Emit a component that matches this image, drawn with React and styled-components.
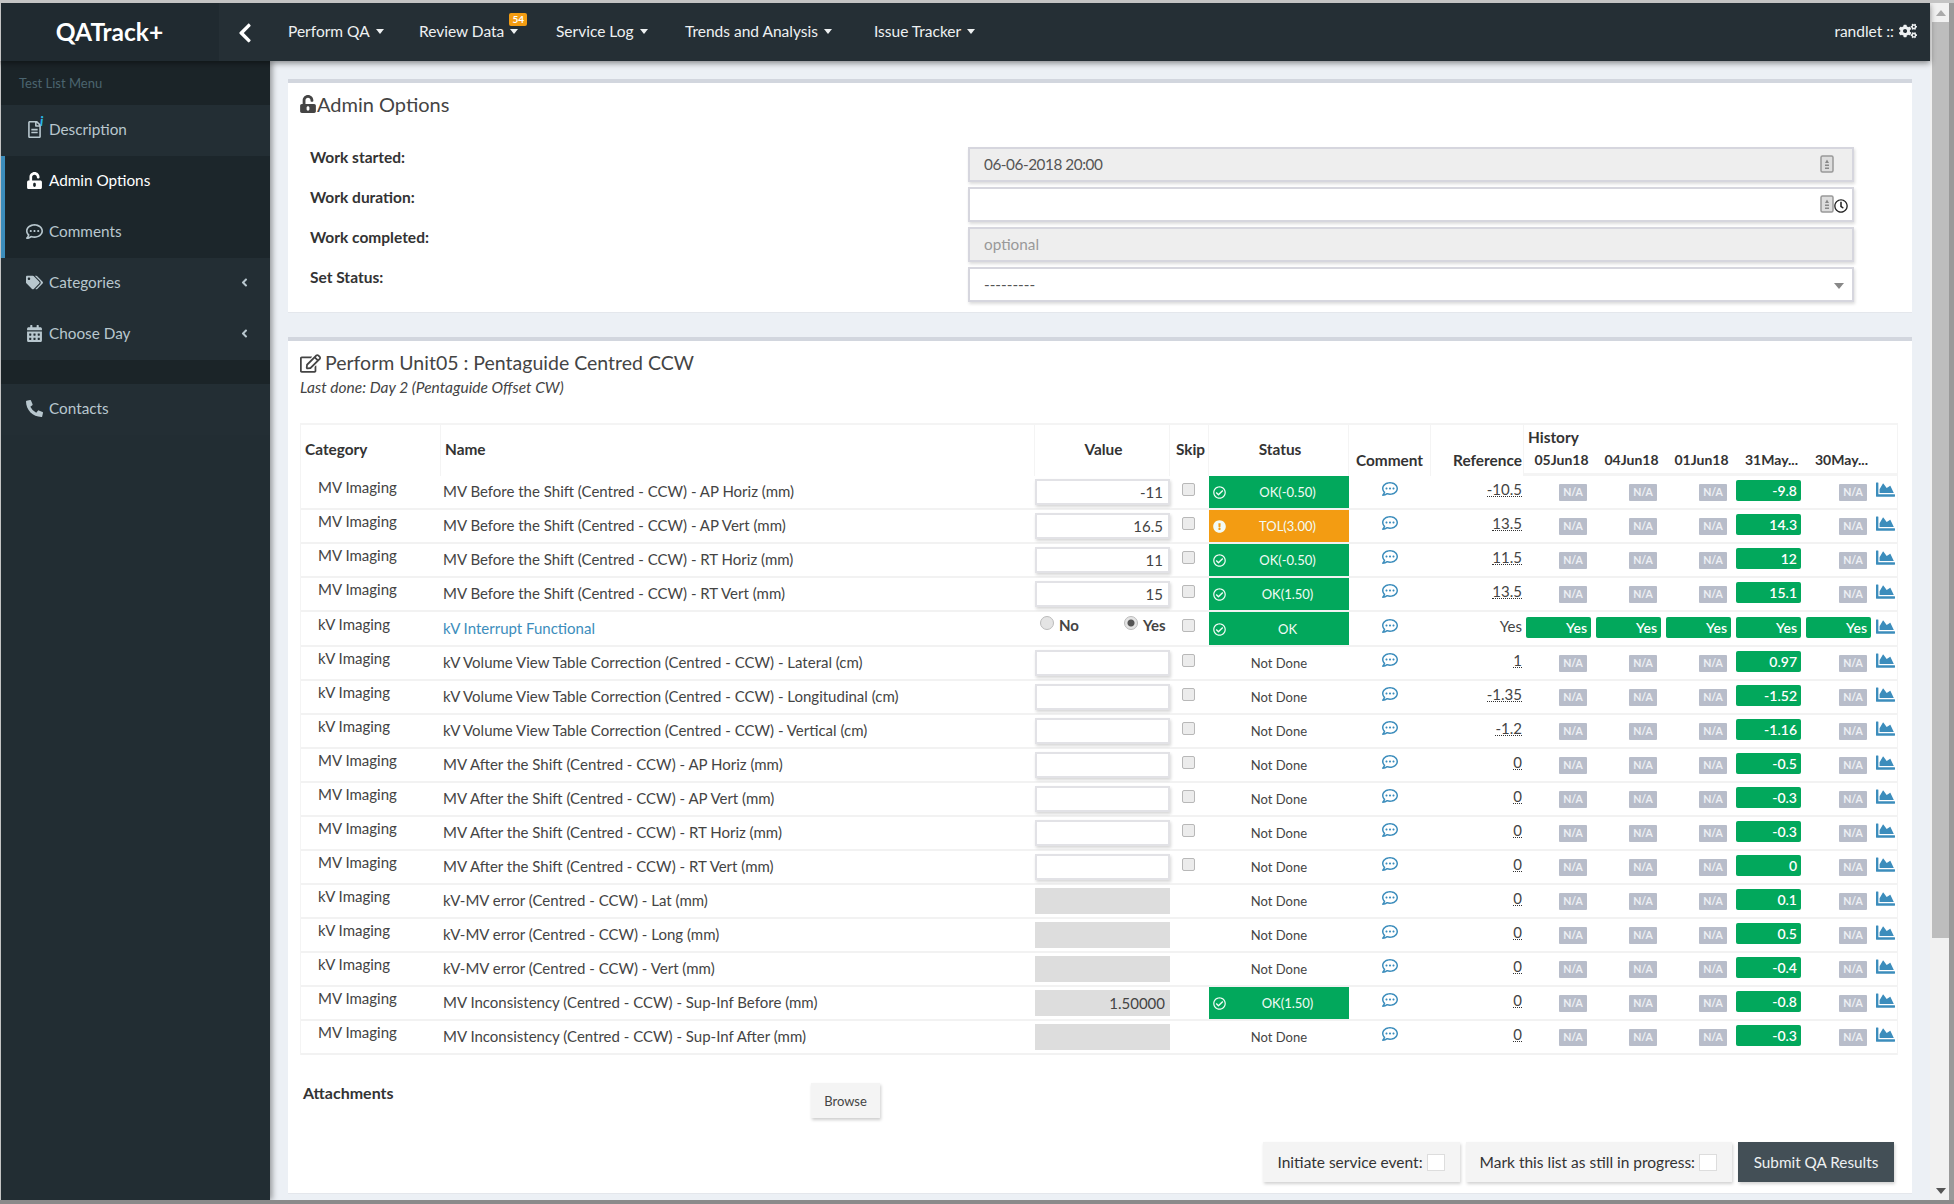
import React from "react";
import styled, { createGlobalStyle } from "styled-components";
import {
  FaAngleLeft,
  FaCalendarAlt,
  FaChartArea,
  FaChevronLeft,
  FaCogs,
  FaExclamationCircle,
  FaPhoneAlt,
  FaRegCheckCircle,
  FaRegClock,
  FaRegCommentDots,
  FaRegEdit,
  FaRegFileAlt,
  FaTags,
  FaUnlockAlt,
} from "react-icons/fa";

const GREEN = "#02a85c";
const ORANGE = "#f39c12";
const BLUE = "#3c8dbc";

const before = "MV Before the Shift (Centred - CCW) - ";
const volume = "kV Volume View Table Correction (Centred - CCW) - ";
const after = "MV After the Shift (Centred - CCW) - ";
const error = "kV-MV error (Centred - CCW) - ";
const incons = "MV Inconsistency (Centred - CCW) - Sup-Inf ";

const ROWS = [
  { cat: "MV Imaging", name: before + "AP Horiz (mm)", value: "-11", status: "OK(-0.50)", ref: "-10.5", last: "-9.8" },
  { cat: "MV Imaging", name: before + "AP Vert (mm)", value: "16.5", status: "TOL(3.00)", tol: true, ref: "13.5", last: "14.3" },
  { cat: "MV Imaging", name: before + "RT Horiz (mm)", value: "11", status: "OK(-0.50)", ref: "11.5", last: "12" },
  { cat: "MV Imaging", name: before + "RT Vert (mm)", value: "15", status: "OK(1.50)", ref: "13.5", last: "15.1" },
  { cat: "kV Imaging", name: "kV Interrupt Functional", bool: true, status: "OK", ref: "Yes" },
  { cat: "kV Imaging", name: volume + "Lateral (cm)", value: "", ref: "1", last: "0.97" },
  { cat: "kV Imaging", name: volume + "Longitudinal (cm)", value: "", ref: "-1.35", last: "-1.52" },
  { cat: "kV Imaging", name: volume + "Vertical (cm)", value: "", ref: "-1.2", last: "-1.16" },
  { cat: "MV Imaging", name: after + "AP Horiz (mm)", value: "", ref: "0", last: "-0.5" },
  { cat: "MV Imaging", name: after + "AP Vert (mm)", value: "", ref: "0", last: "-0.3" },
  { cat: "MV Imaging", name: after + "RT Horiz (mm)", value: "", ref: "0", last: "-0.3" },
  { cat: "MV Imaging", name: after + "RT Vert (mm)", value: "", ref: "0", last: "0" },
  { cat: "kV Imaging", name: error + "Lat (mm)", calc: "", ref: "0", last: "0.1" },
  { cat: "kV Imaging", name: error + "Long (mm)", calc: "", ref: "0", last: "0.5" },
  { cat: "kV Imaging", name: error + "Vert (mm)", calc: "", ref: "0", last: "-0.4" },
  { cat: "MV Imaging", name: incons + "Before (mm)", calc: "1.50000", status: "OK(1.50)", ref: "0", last: "-0.8" },
  { cat: "MV Imaging", name: incons + "After (mm)", calc: "", ref: "0", last: "-0.3" },
];

const DATES = ["05Jun18", "04Jun18", "01Jun18", "31May...", "30May..."];

const GlobalStyle = createGlobalStyle`
  html, body {
    margin: 0;
    padding: 0;
    overflow: hidden;
    background: #ecf0f5;
  }
  body {
    font-family: "Lato", "Open Sans", sans-serif;
    font-size: 15px;
    color: #333;
  }
  * {
    box-sizing: border-box;
  }
`;

const Frame = styled.div`
  width: 1954px;
  height: 1204px;
  display: flex;
  border-top: 3px solid #c4c4c4;
  border-bottom: 4px solid #8a8a8a;
  overflow: hidden;
`;

const Page = styled.div`
  flex: 1;
  min-width: 0;
  display: flex;
  flex-direction: column;
`;

const TopBar = styled.header`
  height: 58px;
  flex: none;
  display: flex;
  align-items: center;
  background: #252f35;
  color: #fff;
  position: relative;
  z-index: 2;
  box-shadow: 0 2px 6px rgba(0, 0, 0, 0.45);
`;

const Logo = styled.div`
  width: 219px;
  height: 100%;
  display: flex;
  align-items: center;
  justify-content: center;
  padding: 0 1px 2px 0;
  background: #202a30;
  border-left: 1px solid #c4c4c4;
  font-size: 24.5px;
  font-weight: 700;
`;

const Collapse = styled.div`
  width: 69px;
  display: flex;
  padding: 2px 0 0 15px;
  font-size: 22px;
`;

const NavItem = styled.div`
  width: ${(p) => p.$width}px;
  display: flex;
  align-items: center;
  position: relative;
  padding-bottom: 2px;
  font-size: 15.5px;
  color: #eef1f2;
`;

const NavLabel = styled.span`
  position: relative;
  display: flex;
  align-items: center;
`;

const Caret = styled.span`
  width: 0;
  height: 0;
  margin-left: 6px;
  border-top: 5px solid #eef1f2;
  border-left: 4.5px solid transparent;
  border-right: 4.5px solid transparent;
`;

const Badge = styled.span`
  position: absolute;
  right: -9px;
  top: -9px;
  width: 18px;
  height: 13px;
  border-radius: 2px;
  background: ${ORANGE};
  color: #fff;
  font-size: 10px;
  font-weight: 700;
  line-height: 13px;
  text-align: center;
`;

const UserMenu = styled.div`
  margin-left: auto;
  padding: 0 13px 2px 0;
  display: flex;
  align-items: center;
  gap: 5px;
  font-size: 15.5px;
  color: #eef1f2;
`;

const Body = styled.div`
  flex: 1;
  min-height: 0;
  display: flex;
`;

const Sidebar = styled.aside`
  width: 270px;
  flex: none;
  background: #222d33;
  border-left: 1px solid #c4c4c4;
  position: relative;
  z-index: 1;
  box-shadow: 2px 0 6px rgba(0, 0, 0, 0.4);
`;

const MenuHeader = styled.div`
  height: 44px;
  padding: 14px 0 0 18px;
  background: #1b2428;
  color: #4b646f;
  font-size: 13px;
`;

const MenuItem = styled.div`
  height: 51px;
  display: flex;
  align-items: center;
  padding: 0 19px 3px 0;
  background: ${(p) => (p.$open ? "#1c262b" : "#232e34")};
  border-left: 4px solid ${(p) => (p.$open ? BLUE : "transparent")};
  color: ${(p) => (p.$active ? "#fff" : "#b8c7ce")};
  font-size: 15.3px;
`;

const MenuIcon = styled.span`
  width: 44px;
  padding-left: 21px;
  display: flex;
  align-items: center;
  font-size: 17px;
  position: relative;
`;

const InfoDot = styled.i`
  position: absolute;
  left: 35px;
  top: -8px;
  font-size: 13px;
  font-weight: 900;
  color: #29b6e8;
`;

const MenuArrow = styled(FaAngleLeft)`
  margin-left: auto;
  font-size: 13px;
`;

const MenuGap = styled.div`
  height: 24px;
  background: #1b2428;
`;

const Main = styled.main`
  flex: 1;
  min-width: 0;
  padding: 18px 18px 0;
  background: #ecf0f5;
  display: flex;
  flex-direction: column;
  gap: 24px;
`;

const Box = styled.section`
  flex: ${(p) => (p.$grow ? "1" : "none")};
  height: ${(p) => (p.$grow ? "auto" : "234px")};
  margin-bottom: ${(p) => (p.$grow ? "6px" : "0")};
  background: #fff;
  border-top: 4px solid #d2d6de;
  border-bottom: 1px solid #e4e7ec;
`;

const BoxTitle = styled.h3`
  margin: 0;
  display: flex;
  align-items: center;
  gap: ${(p) => p.$gap}px;
  font-size: ${(p) => p.$size}px;
  font-weight: 400;
  line-height: 28px;
  color: #444;
  padding: ${(p) => p.$pad};
`;

const FormRow = styled.div`
  height: 40px;
  display: grid;
  grid-template-columns: 658px 886px;
  padding-left: 22px;
`;

const FormLabel = styled.label`
  font-weight: 700;
  font-size: 15.5px;
  color: #333;
  padding-top: 1px;
`;

const Field = styled.div`
  height: 35px;
  display: flex;
  align-items: center;
  padding: ${(p) => (p.$muted ? "0 13px 2px 14px" : "0 13px 1px 14px")};
  border: 2px solid #d6d6de;
  background: ${(p) => (p.$disabled ? "#eee" : "#fff")};
  color: ${(p) => (p.$muted ? "#999" : "#555")};
  box-shadow: 1px 2px 3px rgba(0, 0, 0, 0.14);
  font-size: 15.3px;
  letter-spacing: ${(p) => (p.$tight ? "-0.45px" : "0")};
`;

const FieldIcons = styled.span`
  margin-left: auto;
  display: flex;
  align-items: flex-end;
  margin-right: ${(p) => p.$right}px;
`;

const SelectArrow = styled.span`
  margin: 4px -5px 0 auto;
  width: 0;
  height: 0;
  border-top: 6px solid #888;
  border-left: 5px solid transparent;
  border-right: 5px solid transparent;
`;

const LastDone = styled.div`
  padding: 0 0 0 12px;
  height: 25px;
  margin-bottom: 21px;
  font-style: italic;
  font-size: 15.5px;
  line-height: 20px;
  color: #444;
`;

const Table = styled.table`
  margin-left: 12px;
  width: 1598px;
  table-layout: fixed;
  border-collapse: separate;
  border-spacing: 0;
  border-top: 2px solid #f4f4f4;
  border-left: 1px solid #f4f4f4;
  border-right: 1px solid #f4f4f4;
`;

const Th = styled.th`
  padding: ${(p) => (p.$bottom ? "0 1px 7px" : p.$small ? "0 0 3px 5px" : "0 1px 3px 4px")};
  height: 26px;
  font-size: ${(p) => (p.$small ? "14px" : "15.4px")};
  font-weight: 700;
  color: #333;
  text-align: ${(p) => p.$align || "center"};
  vertical-align: ${(p) => (p.$bottom ? "bottom" : "middle")};
  white-space: nowrap;
  border-right: ${(p) => (p.$sep ? "1px solid #f4f4f4" : "none")};
`;

const HeadEnd = styled.tr`
  th {
    height: 25px;
    padding-bottom: 5px;
    border-bottom: 3px solid #f4f4f4;
  }
`;

const Row = styled.tr`
  --shift: ${(p) => (p.$tall ? "1px" : "0px")};
  height: ${(p) => (p.$tall ? "35px" : "34px")};
`;

const Td = styled.td`
  padding: calc(${(p) => p.$top || 0}px + var(--shift)) 0 0 ${(p) => p.$left || 0}px;
  vertical-align: top;
  border-bottom: 2px solid #f2f2f2;
  line-height: 20px;
  font-size: 15px;
  color: ${(p) => (p.$link ? BLUE : "#444")};
  text-align: ${(p) => p.$align || "left"};
`;

const StatusCell = styled.td`
  padding: 0;
  position: relative;
  border-bottom: 2px solid #f2f2f2;
  background: ${(p) => (p.$tone === "ok" ? GREEN : p.$tone === "tol" ? ORANGE : "transparent")};
  color: ${(p) => (p.$tone ? "#f2fbf6" : "#444")};
  text-align: center;
  font-size: 13px;
`;

const StatusText = styled.span`
  display: block;
  padding-left: ${(p) => (p.$tone ? "17px" : "0")};
`;

const StatusIcon = styled.span`
  position: absolute;
  left: 4px;
  top: 50%;
  margin-top: -6px;
  display: flex;
  font-size: 13px;
`;

const NumberInput = styled.input`
  display: block;
  width: 135px;
  height: 26px;
  padding: 0 5px;
  border: 2px solid #e2e2e6;
  background: #fff;
  box-shadow: 1px 2px 3px rgba(0, 0, 0, 0.16);
  font: inherit;
  color: #444;
  text-align: right;
  outline: none;
`;

const CalcInput = styled(NumberInput)`
  border: none;
  box-shadow: none;
  background: #ddd;
`;

const Radios = styled.div`
  display: flex;
  padding-left: 5px;
`;

const RadioLabel = styled.label`
  width: 84px;
  flex: none;
  display: flex;
  align-items: center;
  gap: 5px;
  font-weight: 700;
  font-size: 15px;
  color: #444;
`;

const RadioDot = styled.span`
  width: 14px;
  height: 14px;
  margin-top: -4px;
  border-radius: 50%;
  border: 1px solid #bbb;
  background: ${(p) => (p.$on ? "radial-gradient(circle, #555 0 3px, #e4e4e4 4px)" : "#e4e4e4")};
`;

const SkipBox = styled.input.attrs({ type: "checkbox" })`
  appearance: none;
  display: block;
  width: 13px;
  height: 13px;
  margin: 0 0 0 12px;
  border: 1px solid #b8b8b8;
  border-radius: 2px;
  background: #ececec;
`;

const Comment = styled(FaRegCommentDots)`
  display: block;
  margin: 0 auto;
  font-size: 16px;
  color: ${BLUE};
`;

const RefValue = styled.span`
  display: inline-block;
  margin-right: 2px;
  line-height: 14px;
  color: #444;
  border-bottom: ${(p) => (p.$plain ? "none" : "1px dotted #333")};
`;

const Pill = styled.div`
  width: 65px;
  height: 21px;
  margin-left: 2px;
  padding-right: 4px;
  border-radius: 2px;
  background: ${GREEN};
  color: #fff;
  font-size: 14px;
  font-weight: 600;
  line-height: 21px;
  text-align: right;
`;

const NotAvailable = styled.div`
  width: 28px;
  height: 17px;
  margin-left: 35px;
  border-radius: 1px;
  background: #b8bdca;
  color: #eef0f4;
  font-size: 10.5px;
  font-weight: 700;
  line-height: 17px;
  text-align: center;
`;

const ChartIcon = styled(FaChartArea)`
  display: block;
  font-size: 19px;
  color: ${BLUE};
`;

const Attachments = styled.div`
  display: grid;
  grid-template-columns: 508px auto;
  padding: 28px 0 0 15px;
  height: 87px;
  font-weight: 700;
  font-size: 16px;
  color: #333;
`;

const Browse = styled.button`
  width: 69px;
  height: 35px;
  border: none;
  background: #f4f4f4;
  box-shadow: 1px 2px 3px rgba(0, 0, 0, 0.2);
  font: inherit;
  font-size: 13px;
  font-weight: 400;
  color: #444;
`;

const Actions = styled.div`
  display: flex;
  justify-content: flex-end;
  gap: 6px;
  padding-right: 18px;
`;

const Toggle = styled.label`
  height: 40px;
  display: flex;
  align-items: center;
  gap: 4px;
  padding: 0 15px 0 14px;
  background: #f4f4f4;
  box-shadow: 1px 2px 3px rgba(0, 0, 0, 0.18);
  font-size: 15.5px;
  color: #333;
`;

const ToggleBox = styled.span`
  width: 18px;
  height: 17px;
  background: #fff;
  border: 1px solid #ddd;
`;

const Submit = styled.button`
  width: 156px;
  height: 40px;
  border: none;
  background: #434f56;
  box-shadow: 1px 2px 3px rgba(0, 0, 0, 0.18);
  font: inherit;
  font-size: 15.3px;
  color: #eef1f2;
`;

const Scrollbar = styled.div`
  width: 24px;
  flex: none;
  display: flex;
  flex-direction: column;
  background: #f1f1f1;
  border-right: 5px solid #9a9a9a;
  padding-left: 2px;
`;

const ScrollArrow = styled.div`
  height: 19px;
  display: flex;
  align-items: center;
  justify-content: center;
  margin-top: ${(p) => (p.$end ? "auto" : "0")};
`;

const ScrollTriangle = styled.span`
  width: 0;
  height: 0;
  border-left: 5px solid transparent;
  border-right: 5px solid transparent;
  ${(p) => (p.$down ? "border-top: 6px solid #555;" : "border-bottom: 6px solid #aaa;")}
`;

const ScrollThumb = styled.div`
  height: 916px;
  background: #bdbdbd;
`;

function DateIcon() {
  return (
    <svg width="14" height="18" viewBox="0 0 14 18">
      <rect x="1" y="1" width="12" height="16" rx="1.5" fill="#ddd" stroke="#999" strokeWidth="1.5" />
      <path d="M7 4.5 5 8h4z M5 9.5h4v1.5H5z M5 12.5h4V14H5z" fill="#888" />
    </svg>
  );
}

function StatusIndicator({ row }) {
  if (!row.status) return <StatusCell>Not Done</StatusCell>;
  const tone = row.tol ? "tol" : "ok";
  return (
    <StatusCell $tone={tone}>
      <StatusIcon>{row.tol ? <FaExclamationCircle /> : <FaRegCheckCircle />}</StatusIcon>
      <StatusText $tone={tone}>{row.status}</StatusText>
    </StatusCell>
  );
}

function ValueEntry({ row }) {
  if (row.bool) {
    return (
      <Radios>
        <RadioLabel><RadioDot />No</RadioLabel>
        <RadioLabel><RadioDot $on />Yes</RadioLabel>
      </Radios>
    );
  }
  if (row.calc !== undefined) return <CalcInput readOnly value={row.calc} />;
  return <NumberInput readOnly value={row.value} />;
}

function ResultRow({ row }) {
  const bool = Boolean(row.bool);
  return (
    <Row $tall={bool}>
      <Td $top={1} $left={17}>{row.cat}</Td>
      <Td $top={5} $left={2} $link={bool}>{row.name}</Td>
      <Td $top={bool ? 2 : 3}><ValueEntry row={row} /></Td>
      <Td $top={bool ? 6 : 7}>{row.calc === undefined && <SkipBox />}</Td>
      <StatusIndicator row={row} />
      <Td $top={5}><Comment /></Td>
      <Td $top={3} $align="right"><RefValue $plain={bool}>{row.ref}</RefValue></Td>
      {DATES.map((date, i) => {
        if (bool) return <Td key={date} $top={4}><Pill>Yes</Pill></Td>;
        if (i === 3) return <Td key={date} $top={4}><Pill>{row.last}</Pill></Td>;
        return <Td key={date} $top={8}><NotAvailable>N/A</NotAvailable></Td>;
      })}
      <Td $top={4} $left={2}><ChartIcon /></Td>
    </Row>
  );
}

export default function App() {
  return (
    <>
      <GlobalStyle />
      <Frame>
        <Page>
          <TopBar>
            <Logo>QATrack+</Logo>
            <Collapse><FaChevronLeft /></Collapse>
            <NavItem $width={131}><NavLabel>Perform QA<Caret /></NavLabel></NavItem>
            <NavItem $width={137}><NavLabel>Review Data<Caret /><Badge>54</Badge></NavLabel></NavItem>
            <NavItem $width={129}><NavLabel>Service Log<Caret /></NavLabel></NavItem>
            <NavItem $width={189}><NavLabel>Trends and Analysis<Caret /></NavLabel></NavItem>
            <NavItem $width={120}><NavLabel>Issue Tracker<Caret /></NavLabel></NavItem>
            <UserMenu>randlet :: <FaCogs size={18} /></UserMenu>
          </TopBar>
          <Body>
            <Sidebar>
              <MenuHeader>Test List Menu</MenuHeader>
              <MenuItem>
                <MenuIcon><FaRegFileAlt /><InfoDot>i</InfoDot></MenuIcon>Description
              </MenuItem>
              <MenuItem $open $active><MenuIcon><FaUnlockAlt /></MenuIcon>Admin Options</MenuItem>
              <MenuItem $open><MenuIcon><FaRegCommentDots /></MenuIcon>Comments</MenuItem>
              <MenuItem><MenuIcon><FaTags /></MenuIcon>Categories<MenuArrow /></MenuItem>
              <MenuItem><MenuIcon><FaCalendarAlt /></MenuIcon>Choose Day<MenuArrow /></MenuItem>
              <MenuGap />
              <MenuItem><MenuIcon><FaPhoneAlt /></MenuIcon>Contacts</MenuItem>
            </Sidebar>
            <Main>
              <Box>
                <BoxTitle $size={20} $gap={0} $pad="7px 0 29px 11px"><FaUnlockAlt size={18} />Admin Options</BoxTitle>
                <FormRow>
                  <FormLabel>Work started:</FormLabel>
                  <Field $disabled $tight>06-06-2018 20:00<FieldIcons $right={5}><DateIcon /></FieldIcons></Field>
                </FormRow>
                <FormRow>
                  <FormLabel>Work duration:</FormLabel>
                  <Field><FieldIcons $right={-9}><DateIcon /><FaRegClock size={14} color="#222" /></FieldIcons></Field>
                </FormRow>
                <FormRow>
                  <FormLabel>Work completed:</FormLabel>
                  <Field $disabled $muted>optional</Field>
                </FormRow>
                <FormRow>
                  <FormLabel>Set Status:</FormLabel>
                  <Field>---------<SelectArrow /></Field>
                </FormRow>
              </Box>
              <Box $grow>
                <BoxTitle $size={19.5} $gap={4} $pad="8px 0 0 12px"><FaRegEdit size={21} />Perform Unit05 : Pentaguide Centred CCW</BoxTitle>
                <LastDone>Last done: Day 2 (Pentaguide Offset CW)</LastDone>
                <Table>
                  <colgroup>
                    <col style={{ width: 140 }} />
                    <col style={{ width: 594 }} />
                    <col style={{ width: 135 }} />
                    <col style={{ width: 39 }} />
                    <col style={{ width: 140 }} />
                    <col style={{ width: 82 }} />
                    <col style={{ width: 93 }} />
                    {DATES.map((d) => <col key={d} style={{ width: 70 }} />)}
                    <col style={{ width: 23 }} />
                  </colgroup>
                  <thead>
                    <tr>
                      <Th rowSpan={2} $align="left" $sep>Category</Th>
                      <Th rowSpan={2} $align="left" $sep>Name</Th>
                      <Th rowSpan={2} $sep>Value</Th>
                      <Th rowSpan={2} $sep>Skip</Th>
                      <Th rowSpan={2} $sep>Status</Th>
                      <Th rowSpan={2} $bottom $sep>Comment</Th>
                      <Th rowSpan={2} $bottom $align="right" $sep>Reference</Th>
                      <Th colSpan={6} $align="left">History</Th>
                    </tr>
                    <HeadEnd>
                      {DATES.map((d) => <Th key={d} $small>{d}</Th>)}
                      <Th />
                    </HeadEnd>
                  </thead>
                  <tbody>
                    {ROWS.map((row) => <ResultRow key={row.name} row={row} />)}
                  </tbody>
                </Table>
                <Attachments>
                  Attachments
                  <Browse>Browse</Browse>
                </Attachments>
                <Actions>
                  <Toggle>Initiate service event:<ToggleBox /></Toggle>
                  <Toggle>Mark this list as still in progress:<ToggleBox /></Toggle>
                  <Submit>Submit QA Results</Submit>
                </Actions>
              </Box>
            </Main>
          </Body>
        </Page>
        <Scrollbar>
          <ScrollArrow><ScrollTriangle /></ScrollArrow>
          <ScrollThumb />
          <ScrollArrow $end><ScrollTriangle $down /></ScrollArrow>
        </Scrollbar>
      </Frame>
    </>
  );
}
